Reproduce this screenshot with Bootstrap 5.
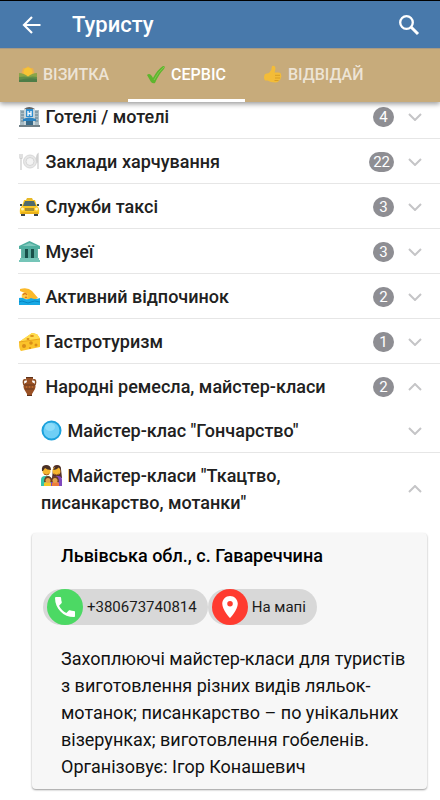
<!DOCTYPE html>
<html lang="uk">
<head>
<meta charset="utf-8">
<meta name="viewport" content="width=device-width, initial-scale=1">
<title>Туристу</title>
<link href="https://cdn.jsdelivr.net/npm/bootstrap@5.3.0/dist/css/bootstrap.min.css" rel="stylesheet">
<style>
body { font-family: Roboto, "Noto Sans", sans-serif; font-size: 18px; line-height: 27px; color: #212121; background: #fff; }
svg { flex: none; }
.top-area { z-index: 10; border-top: 1px solid #000; box-shadow: 0 2px 5px rgba(0,0,0,.4); }
.title-bar { background: #4879ab; height: 47px; padding: 0 20px; color: #fff; }
.title-bar h1 { font-size: 22px; line-height: 27px; font-weight: 500; margin-left: 28px; }
.tab-strip { background: #c7ab7b; height: 54px; border-top: 1px solid #a99a83; }
.tab-strip .tab-link { font-size: 16px; font-weight: 500; color: rgba(255,255,255,.7); padding: 0 19px; gap: 6px; border: 0; border-bottom: 3px solid transparent; background: none; }
.tab-strip .tab-link.active { color: #fff; border-bottom-color: #fff; }
.tab-strip .tab-link:not(.active) svg { opacity: .85; }
.sections { margin-top: -8px; }
.entry { margin-left: 18px; border-bottom: 1px solid #e6e6e6; }
.entry.open { border-bottom: 0; }
.entry.nested { margin-left: 40px; }
.entry-btn { background: none; border: 0; color: #212121; font-weight: 500; padding: 9px 18px 8px 1px; }
.emo { width: 21px; height: 21px; vertical-align: -4px; margin-right: 1px; }
.count { background: #8e8e93; color: #fff; font-size: 15px; line-height: 20px; height: 20px; min-width: 21px; padding: 0 4px; font-weight: 400; margin-right: 14px; }
.place { background: #f7f7f7; margin: 9px 13px 10px 32px; padding: 9px 11px; border-radius: 4px; box-shadow: 0 1px 2px rgba(0,0,0,.4); color: #111; }
.place h2 { font-size: 18px; line-height: 27px; font-weight: 500; color: #000; margin: 0 18px 20px; }
.place p { margin: 20px 0 0 18px; }
.contact { background: #d8d8d8; color: #1c1c1c; height: 36px; font-size: 15px; padding: 0 11px 0 4px; gap: 4px; }
</style>
</head>
<body>
<svg class="d-none" aria-hidden="true">
  <symbol id="down" viewBox="0 0 14 8"><path d="M1 1l6 6 6-6" fill="none" stroke="#c5c5c7" stroke-width="2"/></symbol>
  <symbol id="up" viewBox="0 0 14 8"><path d="M1 7l6-6 6 6" fill="none" stroke="#c5c5c7" stroke-width="2"/></symbol>
</svg>

<header class="top-area position-relative">
  <div class="title-bar d-flex align-items-center">
    <button class="btn p-0 border-0 d-flex" aria-label="Назад"><svg width="24" height="20" viewBox="0 0 24 20" fill="none" stroke="#fff" stroke-width="2.2"><path d="M20.500 10H4M12 2l-8 8 8 8"/></svg></button>
    <h1 class="mb-0 flex-grow-1">Туристу</h1>
    <button class="btn p-0 border-0 d-flex" aria-label="Пошук"><svg width="22" height="22" viewBox="0 0 22 22" fill="none" stroke="#fff"><circle cx="8.500" cy="8.500" r="6.300" stroke-width="2.300"/><path d="M13 13l7 7" stroke-width="3"/></svg></button>
  </div>
  <nav class="tab-strip d-flex">
    <button class="tab-link d-flex align-items-center"><svg width="18" height="18" viewBox="0 0 18 18"><path d="M3 6l1-3 3 0 2-2 2 2h3l1 3 1 4H2z" fill="#eeb04a"/><circle cx="9" cy="7" r="4.500" fill="#ffc928"/><path d="M0 8q5 0 9 3.500Q13 8 18 8v9H0z" fill="#80a43f"/><path d="M0 12q6-1 9 0 5-1 9 0v5H0z" fill="#4f8a3f"/><path d="M0 15q10-3 18-1v3H0z" fill="#39763e"/></svg>ВІЗИТКА</button>
    <button class="tab-link active d-flex align-items-center" aria-current="page"><svg width="18" height="19" viewBox="0 0 18 19"><path d="M0 10q3-3 6 3Q10 5 16 1q3 0 1 3Q12 9 8 18q-2 1-4-1z" fill="#5eb52d"/><path d="M7 15Q11 7 17 2" fill="none" stroke="#82c94f"/></svg>СЕРВІС</button>
    <button class="tab-link d-flex align-items-center"><svg width="18" height="18" viewBox="0 0 18 18"><path d="M1 9l4-1q3-3 3-7 3-1 3.500 2 0 2-1 4.500h4q3 0 2.500 2.500 1 2-.500 3 .500 2-1.500 2.500-.500 2-3.500 2-5 0-8-2H1q-2-3 0-6.500z" fill="#fbc02d"/><path d="M11 10.300h5M11 13h5M10.500 15.500h4" stroke="#dd9c15" fill="none"/></svg>ВІДВІДАЙ</button>
  </nav>
</header>

<main class="sections">
  <div class="entry"><button class="entry-btn d-flex align-items-center w-100 text-start">
    <span class="flex-grow-1"><svg class="emo" viewBox="0 0 21 21"><path d="M5 3q5-4 11 0v3H5z" fill="#666"/><path d="M1 4h5v15H1zM15 4h5v15h-5z" fill="#a8bcc5"/><path d="M2 6h3M2 9h3M2 12h3M2 15h3M16 6h3M16 9h3M16 12h3M16 15h3" stroke="#64808e"/><path d="M5 3h11v16H5z" fill="#c7d5da"/><path d="M7 3h7v8H7z" fill="#2d8ed0"/><path d="M9 5v5M12 5v5M9 7.500h3" stroke="#fff" stroke-width="1.300"/><path d="M4 13q6-3 13 0v2H4z" fill="#2b83c1"/><path d="M7 15h7v5H7z" fill="#396a88"/><path d="M0 19h21v2H0z" fill="#718087"/></svg> Готелі / мотелі</span>
    <span class="count rounded-pill text-center">4</span><svg width="14" height="8"><use href="#down"/></svg></button></div>
  <div class="entry"><button class="entry-btn d-flex align-items-center w-100 text-start">
    <span class="flex-grow-1"><svg class="emo" viewBox="0 0 21 21"><circle cx="11" cy="10.500" r="6.500" fill="#e7e7e7" stroke="#d8d8d8"/><circle cx="11" cy="10.500" r="4" fill="#f3f3f3" stroke="#d6d6d6"/><path d="M1 3v4q1 2 2 0V3M2 7v12M19 18V3q-2 2-1 8h1" fill="none" stroke="#d0d0d0" stroke-width="1.300"/></svg> Заклади харчування</span>
    <span class="count rounded-pill text-center">22</span><svg width="14" height="8"><use href="#down"/></svg></button></div>
  <div class="entry"><button class="entry-btn d-flex align-items-center w-100 text-start">
    <span class="flex-grow-1"><svg class="emo" viewBox="0 0 21 21"><path d="M7 4l1-2h5l1 2z" fill="#e7b928"/><path d="M2 16h4v4H2zM15 16h4v4h-4z" fill="#3c4448"/><path d="M5 4h11l2 6q3 2 2 8H1q-1-6 2-8z" fill="#fbc723"/><path d="M6 5h9l2 5H4z" fill="#506b6c"/><path d="M6 12h9v3H6z" fill="#a68f34"/><circle cx="3.500" cy="13" r="1.500" fill="#fff6b5"/><circle cx="17.500" cy="13" r="1.500" fill="#fff6b5"/><path d="M1 9h2M18 9h2" stroke="#384d50" stroke-width="2"/><path d="M2 17h17" stroke="#d79b16"/></svg> Служби таксі</span>
    <span class="count rounded-pill text-center">3</span><svg width="14" height="8"><use href="#down"/></svg></button></div>
  <div class="entry"><button class="entry-btn d-flex align-items-center w-100 text-start">
    <span class="flex-grow-1"><svg class="emo" viewBox="0 0 21 21"><path d="M0 5l10.500-5L21 5v3H0z" fill="#4fae9f"/><path d="M3 5l7.500-3L18 5z" fill="#80c9bd"/><path d="M2 8h17v10H2z" fill="#62b6a8"/><path d="M6 8h3v9H6zM12 8h3v9h-3z" fill="#184f49"/><path d="M3 8h3v9H3zM9 8h3v9H9zM15 8h3v9h-3z" fill="#58aa9c"/><path d="M1 17h19v2h1v2H0v-2h1z" fill="#75c5b8"/></svg> Музеї</span>
    <span class="count rounded-pill text-center">3</span><svg width="14" height="8"><use href="#down"/></svg></button></div>
  <div class="entry"><button class="entry-btn d-flex align-items-center w-100 text-start">
    <span class="flex-grow-1"><svg class="emo" viewBox="0 0 21 21"><path d="M1 3q8-2 12 2l6 7q-4 3-12 1l-3-2 2-4-5-2z" fill="#fbb92b"/><circle cx="6" cy="10" r="3.300" fill="#ffca45"/><path d="M4 9q2-3 4 0M6 11q1 1 2 0" fill="none" stroke="#d87820" stroke-width="1.300"/><path d="M0 12q3-1 6 1 3 1 6-1 4 2 9 0v7H0z" fill="#18a8e4"/><path d="M0 16q3-2 6 0t6 0 9 0" fill="none" stroke="#0786c2"/></svg> Активний відпочинок</span>
    <span class="count rounded-pill text-center">2</span><svg width="14" height="8"><use href="#down"/></svg></button></div>
  <div class="entry"><button class="entry-btn d-flex align-items-center w-100 text-start">
    <span class="flex-grow-1"><svg class="emo" viewBox="0 0 21 21"><path d="M0 11L13 2q6 0 8 6v8L2 20q-2-1-2-9z" fill="#fbc32a"/><path d="M0 11L13 2q6 0 8 6z" fill="#ffdb4d"/><path d="M0 11l21-3" stroke="#eaa51b"/><g fill="#d98e18"><circle cx="5" cy="15" r="2"/><circle cx="12" cy="12" r="1.800"/><circle cx="17" cy="14" r="1.500"/><circle cx="11" cy="17" r="1"/><ellipse cx="13" cy="5" rx="2" ry="1"/><ellipse cx="9" cy="8" rx="1.500" ry="1"/></g></svg> Гастротуризм</span>
    <span class="count rounded-pill text-center">1</span><svg width="14" height="8"><use href="#down"/></svg></button></div>
  <div class="entry open"><button class="entry-btn d-flex align-items-center w-100 text-start" aria-expanded="true">
    <span class="flex-grow-1"><svg class="emo" viewBox="0 0 21 21"><path d="M7 4Q3 3 5 9M14 4q4-1 2 5" fill="none" stroke="#8b4c22" stroke-width="1.500"/><path d="M7 1h7v2l-1 3q5 2 3 7l-3 5v2H8v-2l-3-5q-2-5 3-7L7 3z" fill="#995024"/><path d="M5 9h11M6 13h9" stroke="#6a3a1e"/><path d="M7 1h7v1H7zM8 19h5v1H8z" fill="#5d321c"/><path d="M7 11h1M10 11h1M13 11h1" stroke="#d07a35"/></svg> Народні ремесла, майстер-класи</span>
    <span class="count rounded-pill text-center">2</span><svg width="14" height="8"><use href="#up"/></svg></button></div>
  <div class="entry nested"><button class="entry-btn d-flex align-items-center w-100 text-start">
    <span class="flex-grow-1"><svg class="emo" viewBox="0 0 21 21"><circle cx="10.500" cy="10.500" r="9" fill="#6fcff6" stroke="#1ba1dc" stroke-width="2"/><ellipse cx="9" cy="7" rx="5" ry="4" fill="#8bdcfa"/></svg> Майстер-клас "Гончарство"</span>
    <svg width="14" height="8"><use href="#down"/></svg></button></div>
  <div class="entry nested open"><button class="entry-btn d-flex align-items-center w-100 text-start" aria-expanded="true">
    <span class="flex-grow-1 pe-3"><svg class="emo" viewBox="0 0 21 21"><path d="M12 4q0-4 4-4t4 4l1 9H11z" fill="#553029"/><path d="M0 21v-6q0-4 4-4h4l3 3v7z" fill="#35c4aa"/><path d="M10 21v-7l3-3h4q4 0 4 4v6z" fill="#8048bd"/><circle cx="5.500" cy="6" r="4" fill="#f6b52e"/><circle cx="15.500" cy="6" r="4" fill="#f6b52e"/><path d="M1 6Q0 0 5 0t5 5Q6 5 4 3L2 6zM12 5q4 0 6-3l2 4q0-6-5-5z" fill="#493026"/><path d="M3 9q3 2 5 0M13 9q3 2 5 0" fill="none" stroke="#9c5620"/><path d="M3 21v-3q4-3 7 0v3z" fill="#f3c526"/><path d="M11 21v-3q4-3 7 0v3z" fill="#ed7d3b"/><path d="M3 17q0-6 4-6t4 6zM10 17q0-6 4-6t4 6z" fill="#6a3c22"/><circle cx="7" cy="15.500" r="2.500" fill="#e7a44c"/><circle cx="14" cy="15.500" r="2.500" fill="#e7a44c"/></svg> Майстер-класи "Ткацтво, писанкарство, мотанки"</span>
    <svg width="14" height="8"><use href="#up"/></svg></button></div>

  <section class="place">
    <h2>Львівська обл., с. Гавареччина</h2>
    <div class="d-flex">
      <a class="contact rounded-pill d-flex align-items-center text-decoration-none" href="tel:+380673740814"><svg width="36" height="36" viewBox="0 0 36 36"><circle cx="18" cy="18" r="18" fill="#4cd964"/><path transform="translate(4.700 4.700) scale(1.110)" fill="#fff" d="M6.620 10.790c1.440 2.830 3.760 5.140 6.590 6.590l2.200-2.200c.27-.27.670-.36 1.020-.24 1.120.37 2.330.57 3.570.57.550 0 1 .45 1 1V20c0 .55-.45 1-1 1-9.390 0-17-7.610-17-17 0-.55.450-1 1-1h3.500c.55 0 1 .45 1 1 0 1.250.2 2.450.57 3.570.11.350.03.740-.25 1.020z"/></svg>+380673740814</a>
      <a class="contact rounded-pill d-flex align-items-center text-decoration-none" href="#map"><svg width="36" height="36" viewBox="0 0 36 36"><circle cx="18" cy="18" r="18" fill="#ff3b30"/><path transform="translate(4.700 4.700) scale(1.110)" fill="#fff" d="M12 2C8.130 2 5 5.130 5 9c0 5.250 7 13 7 13s7-7.750 7-13c0-3.870-3.130-7-7-7zm0 9.500a2.500 2.500 0 1 1 0-5 2.500 2.500 0 0 1 0 5z"/></svg>На мапі</a>
    </div>
    <p>Захоплюючі майстер-класи для туристів з виготовлення різних видів ляльок-мотанок; писанкарство – по унікальних візерунках; виготовлення гобеленів. Організовує: Ігор Конашевич</p>
  </section>
</main>
<script src="https://cdn.jsdelivr.net/npm/bootstrap@5.3.0/dist/js/bootstrap.bundle.min.js"></script>
</body>
</html>
